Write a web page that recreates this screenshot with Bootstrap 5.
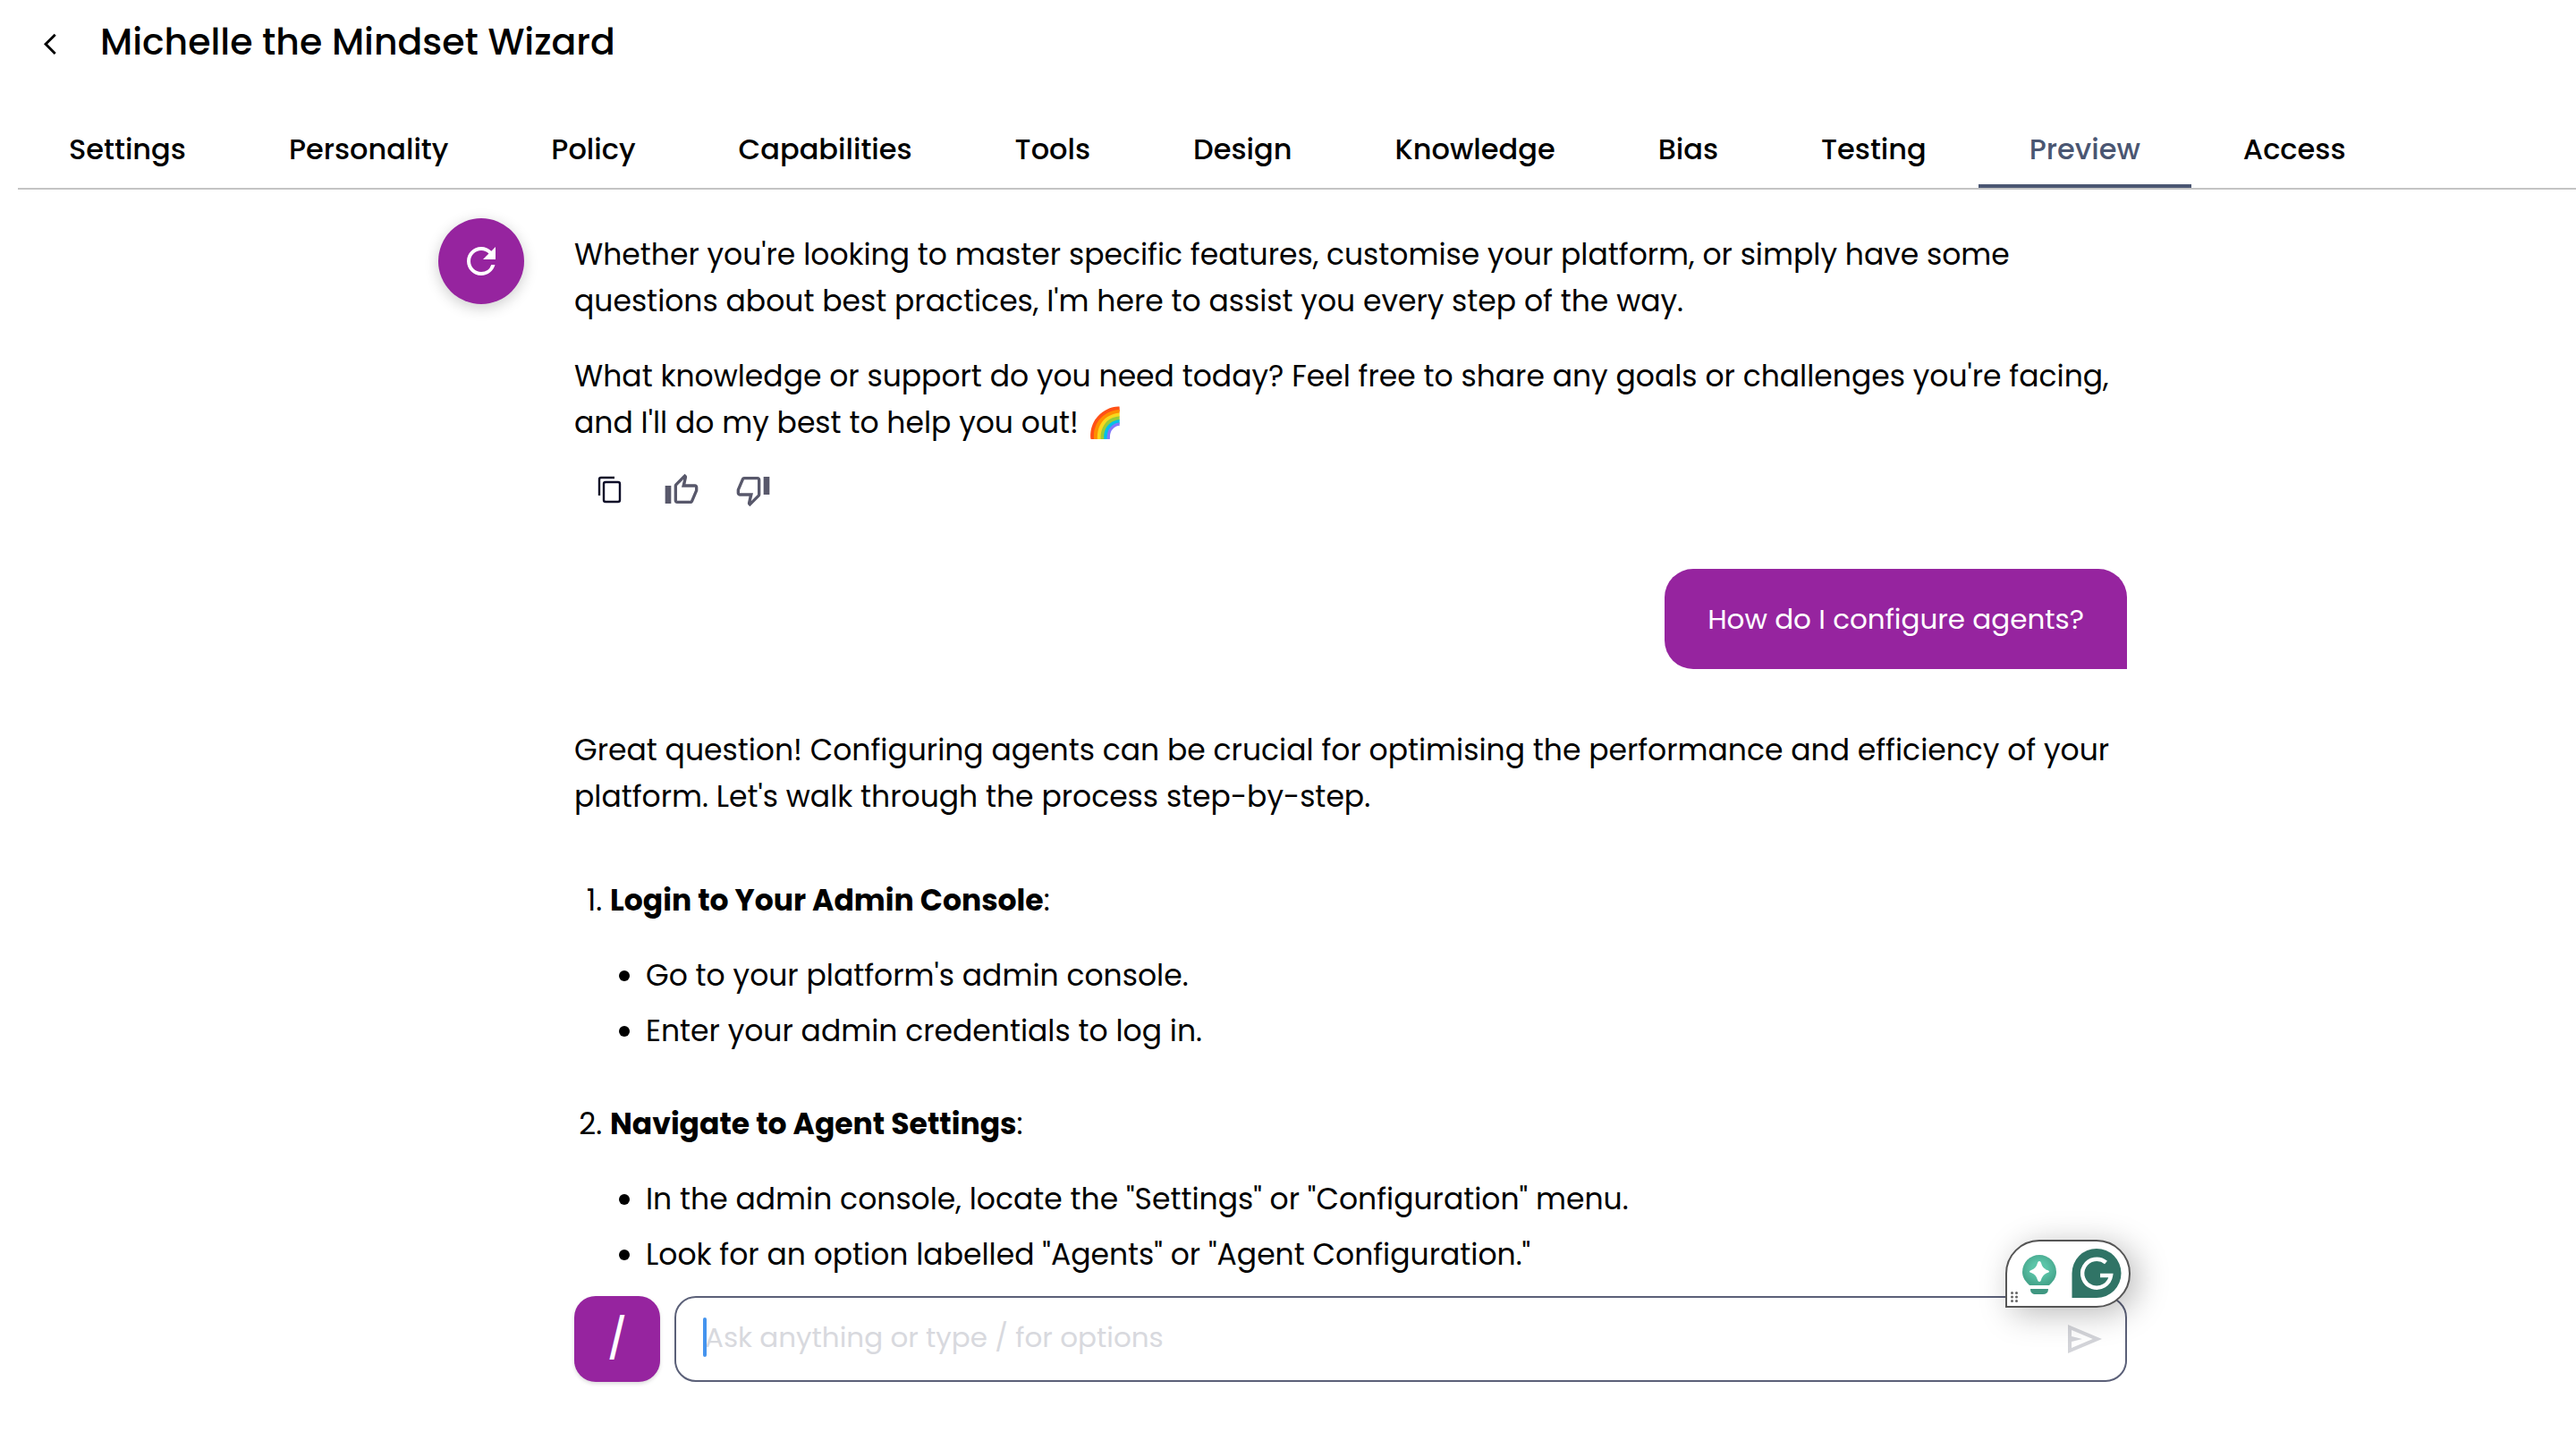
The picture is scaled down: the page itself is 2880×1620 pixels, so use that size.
<!DOCTYPE html>
<html lang="en">
<head>
<meta charset="utf-8">
<meta name="viewport" content="width=device-width, initial-scale=1">
<title>Michelle the Mindset Wizard</title>
<link href="https://cdn.jsdelivr.net/npm/bootstrap@5.3.0/dist/css/bootstrap.min.css" rel="stylesheet">
<style>
:root { --brand: #96249f; --slate: #4a5672; }
body { font-family: Poppins, Inter, "Noto Sans", sans-serif; font-size: 32px; color: #000; background: #fff; }
svg { display: block; flex: none; }
.agent-header { height: 94px; padding: 0 42px; gap: 42px; }
.agent-header h1 { font-size: 41px; font-weight: 500; }
.back-link svg { overflow: visible; }
.agent-tabs { margin: 28px 0 0 20px; gap: 1px; border-bottom: 2px solid #c4c4c4; }
.agent-tabs .nav-link { height: 88px; padding: 2px 57px 0; font-weight: 500; line-height: 86px; color: #000; border-radius: 0; }
.agent-tabs .nav-link.active { color: var(--slate); box-shadow: inset 0 -4px var(--slate); }
.chat-shell { padding-right: 12px; }
.chat-width { width: 100%; max-width: 1888px; margin: 0 auto; }
.chat-scroll { min-height: 0; overflow: hidden; }
.reset-btn { width: 96px; height: 96px; margin: 32px 56px 0 0; background: var(--brand); color: #fff; box-shadow: 0 4px 16px rgba(0,0,0,.2); }
.reset-btn:hover, .slash-btn:hover { background: var(--brand); color: #fff; }
.thread { padding-top: 47px; }
.reply { font-size: 33px; line-height: 52px; }
.reply p { margin: 0 0 32px; }
.reply strong { font-weight: 700; }
.reply ol, .reply ul { margin: 0; padding-left: 40px; }
.reply ol { margin-top: 64px; }
.reply ol > li + li { margin-top: 52px; }
.reply ul { margin-top: 32px; list-style-type: disc; }
.reply ul li + li { margin-top: 10px; }
.reply p:last-of-type { margin-bottom: 0; }
.reply-actions { margin-top: 9px; }
.reply-actions .btn { width: 80px; height: 80px; color: #58586b; }
.reply-actions .btn-copy { color: #0d0d28; }
.question { margin: 48px 0 65px; padding: 0 48px; line-height: 112px; font-size: 31px; color: #fff; background: var(--brand); border-radius: 32px 32px 0 32px; }
.composer { padding: 0 0 75px 152px; gap: 16px; }
.slash-btn { width: 96px; height: 96px; flex: none; font-size: 44px; font-weight: 500; line-height: 1; color: #fff; background: var(--brand); border-radius: 24px; box-shadow: 0 2px 4px rgba(0,0,0,.15); }
.prompt-input { height: 96px; padding: 0 96px 4px 32px; font-size: 31px; color: #000; border: 2px solid #5b6078; border-radius: 24px; }
.prompt-input::placeholder { color: #d8d9de; opacity: 1; }
.prompt-caret { left: 32px; top: 24px; width: 4px; height: 44px; border-radius: 2px; background: #4594ee; }
.send-btn { right: 24px; top: 24px; color: #d3d4d9; }
.writing-helper { right: -4px; top: -63px; width: 140px; height: 76px; background: #fff; border: 2px solid #555; border-radius: 38px 38px 38px 0; box-shadow: 8px 6px 36px rgba(0,0,0,.28); }
</style>
</head>
<body>
<div class="d-flex flex-column vh-100 overflow-hidden">
  <header>
    <div class="agent-header d-flex align-items-center">
      <a href="#" class="back-link text-reset" aria-label="Back">
        <svg width="28" height="28" viewBox="0 -2 24 24" fill="currentColor"><path d="M17.77 3.77 16 2 6 12l10 10 1.77-1.77L9.54 12z"/></svg>
      </a>
      <h1 class="mb-0">Michelle the Mindset Wizard</h1>
    </div>
    <nav class="agent-tabs nav flex-nowrap" aria-label="Agent sections">
      <a class="nav-link" href="#">Settings</a>
      <a class="nav-link" href="#">Personality</a>
      <a class="nav-link" href="#">Policy</a>
      <a class="nav-link" href="#">Capabilities</a>
      <a class="nav-link" href="#">Tools</a>
      <a class="nav-link" href="#">Design</a>
      <a class="nav-link" href="#">Knowledge</a>
      <a class="nav-link" href="#">Bias</a>
      <a class="nav-link" href="#">Testing</a>
      <a class="nav-link active" aria-current="page" href="#">Preview</a>
      <a class="nav-link" href="#">Access</a>
    </nav>
  </header>

  <main class="chat-shell chat-scroll flex-grow-1">
    <div class="chat-width d-flex align-items-start">
      <button type="button" class="reset-btn btn border-0 rounded-circle p-0 d-flex align-items-center justify-content-center flex-shrink-0" aria-label="Restart chat">
        <svg width="48" height="48" viewBox="0 0 24 24" fill="currentColor"><path d="M17.65 6.35A7.958 7.958 0 0 0 12 4c-4.42 0-7.99 3.58-7.99 8s3.57 8 7.99 8c3.73 0 6.84-2.55 7.73-6h-2.08A5.99 5.99 0 0 1 12 18c-3.31 0-6-2.69-6-6s2.69-6 6-6c1.66 0 3.14.69 4.22 1.78L13 11h7V4z"/></svg>
      </button>
      <div class="thread d-flex flex-column flex-grow-1">
        <article class="reply">
          <p>Whether you're looking to master specific features, customise your platform, or simply have some questions about best practices, I'm here to assist you every step of the way.</p>
          <p>What knowledge or support do you need today? Feel free to share any goals or challenges you're facing, and I'll do my best to help you out! 🌈</p>
        </article>
        <div class="reply-actions d-flex">
          <button type="button" class="btn btn-copy border-0 p-0 d-flex align-items-center justify-content-center" aria-label="Copy">
            <svg width="40" height="40" viewBox="0 0 40 40" fill="none" stroke="currentColor" stroke-width="2.400"><path d="M8 26V8a2 2 0 0 1 2-2h15"/><rect x="13" y="11" width="18" height="22" rx="2"/></svg>
          </button>
          <button type="button" class="btn border-0 p-0 d-flex align-items-center justify-content-center" aria-label="Good reply">
            <svg width="40" height="40" viewBox="0 0 24 24" fill="currentColor"><path d="M9 21h9c.83 0 1.54-.5 1.84-1.22l3.02-7.05c.09-.23.14-.47.14-.73v-2c0-1.1-.9-2-2-2h-6.31l.95-4.57.03-.32c0-.41-.17-.79-.44-1.06L14.17 1 7.58 7.59C7.22 7.95 7 8.45 7 9v10c0 1.1.9 2 2 2M9 9l4.34-4.34L12 10h9v2l-3 7H9zM1 9h4v12H1z"/></svg>
          </button>
          <button type="button" class="btn border-0 p-0 d-flex align-items-center justify-content-center" aria-label="Bad reply">
            <svg width="40" height="40" viewBox="0 0 24 24" fill="currentColor"><path d="M15 3H6c-.83 0-1.54.5-1.84 1.22l-3.02 7.05c-.09.23-.14.47-.14.73v2c0 1.1.9 2 2 2h6.31l-.95 4.57-.03.32c0 .41.17.79.44 1.06L9.83 23l6.59-6.59c.36-.36.58-.86.58-1.41V5c0-1.1-.9-2-2-2m0 12-4.34 4.34L12 14H3v-2l3-7h9zm4-12h4v12h-4z"/></svg>
          </button>
        </div>
        <div class="question align-self-end">How do I configure agents?</div>
        <article class="reply">
          <p>Great question! Configuring agents can be crucial for optimising the performance and efficiency of your platform. Let's walk through the process step-by-step.</p>
          <ol>
            <li><strong>Login to Your Admin Console</strong>:
              <ul>
                <li>Go to your platform's admin console.</li>
                <li>Enter your admin credentials to log in.</li>
              </ul>
            </li>
            <li><strong>Navigate to Agent Settings</strong>:
              <ul>
                <li>In the admin console, locate the "Settings" or "Configuration" menu.</li>
                <li>Look for an option labelled "Agents" or "Agent Configuration."</li>
              </ul>
            </li>
          </ol>
        </article>
      </div>
    </div>
  </main>

  <footer class="chat-shell">
    <form class="composer chat-width d-flex">
      <button type="button" class="slash-btn btn border-0 p-0" aria-label="Commands">/</button>
      <div class="position-relative flex-grow-1">
        <input type="text" class="prompt-input form-control" aria-label="Message" placeholder="Ask anything or type / for options">
        <span class="prompt-caret position-absolute"></span>
        <button type="submit" class="send-btn btn border-0 p-0 position-absolute" aria-label="Send">
          <svg width="48" height="48" viewBox="0 0 24 24" fill="currentColor"><path d="M3 20V4l19 8zm2-3 11.850-5L5 7v3.500l6 1.500-6 1.500z"/></svg>
        </button>
        <div class="writing-helper position-absolute">
          <svg width="136" height="72" viewBox="0 0 136 72">
            <defs><radialGradient id="glow" cx=".5" cy=".45" r=".55"><stop offset=".4" stop-color="#5cc4a8"/><stop offset="1" stop-color="#45a58b"/></radialGradient></defs>
            <path d="M36 15a19 19 0 0 1 19 19c0 7-4 11-8 15H25c-4-4-8-8-8-15a19 19 0 0 1 19-19z" fill="url(#glow)"/>
            <path d="M26 53h20c0 4-2 6-6 6h-8c-4 0-6-2-6-6z" fill="#3f9781"/>
            <path d="M36 22q1.500 0 2 2 1.500 6 7 8 2 .5 2 1.500t-2 1.500q-5.500 2-7 8-.5 2-2 2t-2-2q-1.500-6-7-8-2-.5-2-1.500t2-1.500q5.500-2 7-8 .5-2 2-2z" fill="#fff"/>
            <path d="M100 8a27.500 27.500 0 0 1 0 55H72.500V35.500A27.500 27.500 0 0 1 100 8z" fill="#307466"/>
            <path d="M110.500 23.500A16 16 0 1 0 116 38h-12" fill="none" stroke="#fff" stroke-width="4.500"/>
            <g fill="#666"><circle cx="5.500" cy="57.500" r="1.500"/><circle cx="10.500" cy="57.500" r="1.500"/><circle cx="5.500" cy="62" r="1.500"/><circle cx="10.500" cy="62" r="1.500"/><circle cx="5.500" cy="66.500" r="1.500"/><circle cx="10.500" cy="66.500" r="1.500"/></g>
          </svg>
        </div>
      </div>
    </form>
  </footer>
</div>
<script src="https://cdn.jsdelivr.net/npm/bootstrap@5.3.0/dist/js/bootstrap.bundle.min.js"></script>
</body>
</html>
